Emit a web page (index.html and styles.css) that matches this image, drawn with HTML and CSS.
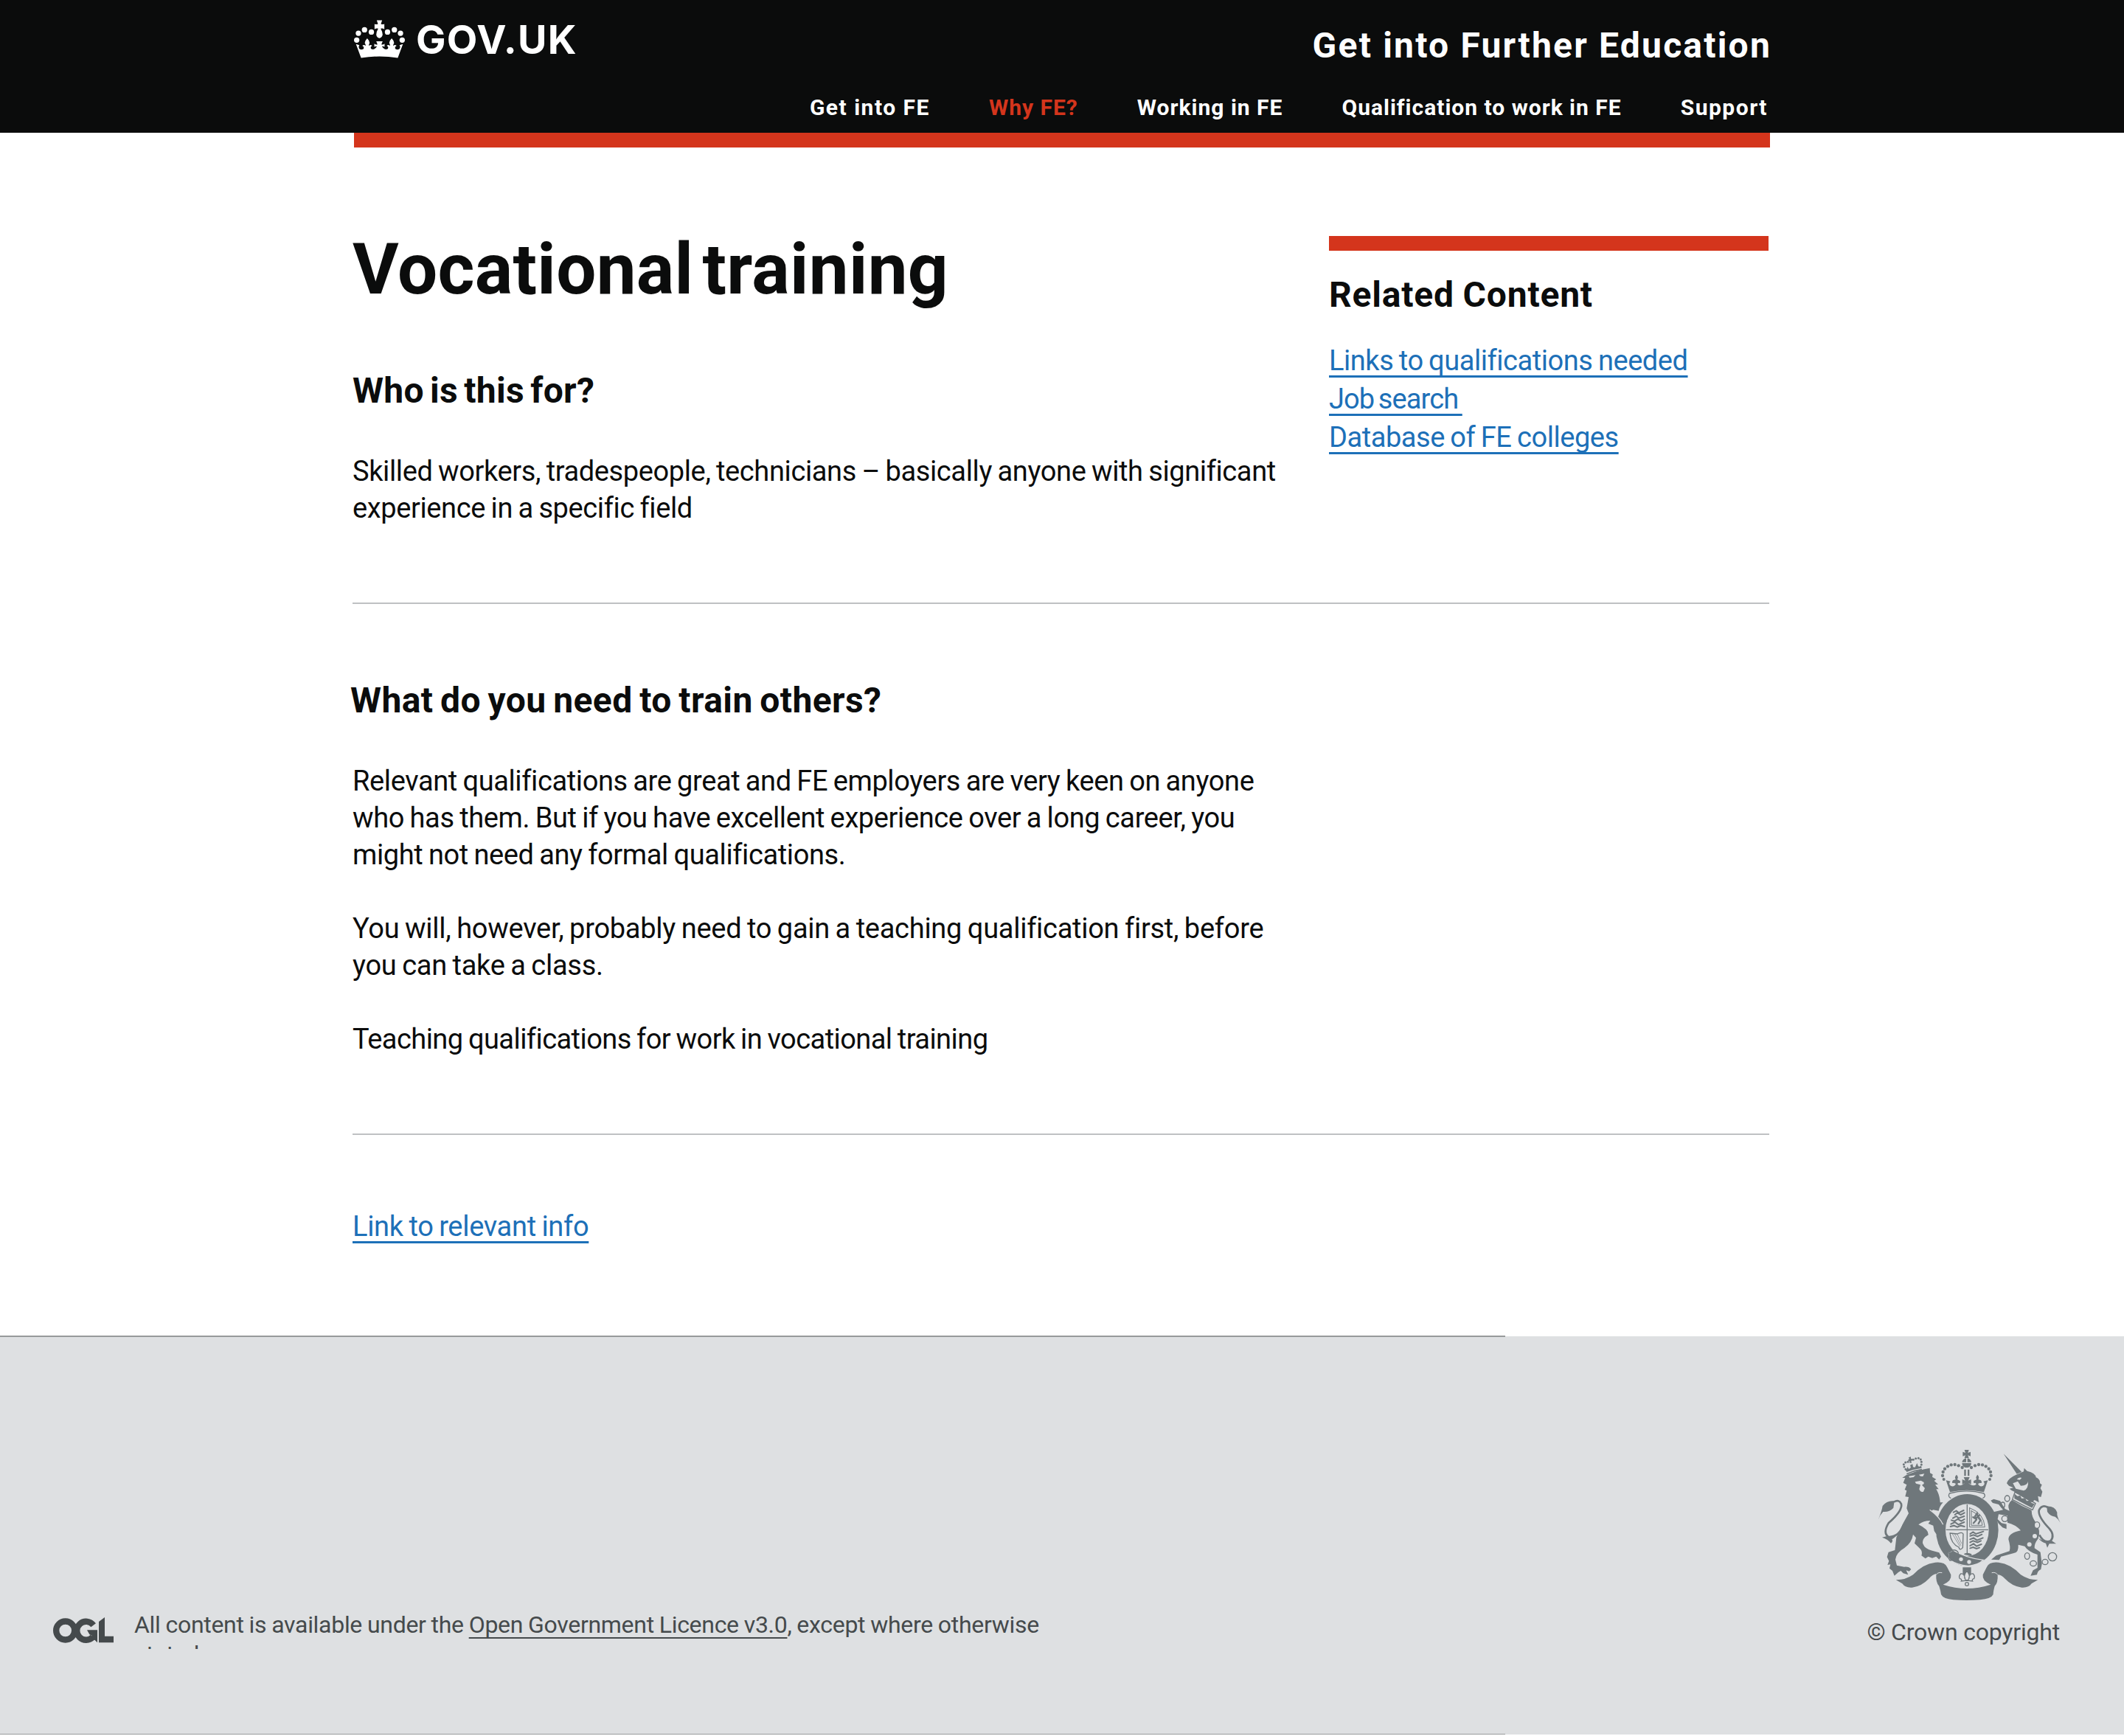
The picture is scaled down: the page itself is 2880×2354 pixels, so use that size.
FILE: index.html
```html
<!DOCTYPE html>
<html lang="en">
<head>
<meta charset="utf-8">
<title>Vocational training - Get into Further Education</title>
<link rel="stylesheet" href="styles.css">
</head>
<body>
<header class="header">
  <div class="header-inner">
    <a class="logo">
      <svg class="logo-crown" viewBox="60 50 208 156" aria-hidden="true">
        <g fill="#fff">
          <circle cx="71" cy="132" r="11"/><circle cx="78" cy="104" r="11"/><circle cx="103" cy="90" r="11"/><circle cx="131" cy="99" r="11"/>
          <circle cx="257" cy="132" r="11"/><circle cx="250" cy="104" r="11"/><circle cx="225" cy="90" r="11"/><circle cx="197" cy="99" r="11"/>
          <path d="M153 51H175L170 66Q177 70 184 66V88Q177 82 169 85Q176 96 177 110Q174 123 164 124Q153 123 151 110Q152 96 159 85Q151 82 144 88V66Q151 70 158 66Z"/>
          <path d="M68 148L82 153Q77 160 82 168Q90 174 99 168Q103 160 94 155Q101 149 108 156Q108 150 104 144Q104 135 114 125Q124 135 124 144Q120 150 121 156Q127 149 134 155Q125 160 130 168Q140 174 148 165Q152 160 154 158Q148 156 143 160V147Q149 152 156 150L151 137H177L172 150Q179 152 185 147V160Q180 156 174 158Q176 160 180 165Q188 174 198 168Q203 160 194 155Q201 149 207 156Q208 150 204 144Q204 135 214 125Q224 135 224 144Q220 150 220 156Q227 149 234 155Q225 160 229 168Q238 174 246 168Q251 160 246 153L260 148L239 205Q164 193 89 205Z"/>
        </g>
      </svg>
      <span class="logo-text">GOV.UK</span>
    </a>
    <div class="header-right">
      <div class="service-name">Get into Further Education</div>
      <nav class="nav">
        <a class="wide">Get into FE</a>
        <a class="active">Why FE?</a>
        <a>Working in FE</a>
        <a>Qualification to work in FE</a>
        <a class="wide">Support</a>
      </nav>
    </div>
  </div>
</header>
<div class="accent-bar"></div>

<main class="main">
  <div class="intro">
    <div class="column">
      <h1>Vocational training</h1>
      <h2 class="who">Who is this for?</h2>
      <p>Skilled workers, tradespeople, technicians – basically anyone with significant<br>experience in a specific field</p>
    </div>
    <aside class="related">
      <h2>Related Content</h2>
      <a class="link">Links to qualifications needed</a>
      <a class="link job-link">Job search&nbsp;</a>
      <a class="link">Database of FE colleges</a>
    </aside>
  </div>
  <hr>
  <h2 class="what">What do you need to train others?</h2>
  <p>Relevant qualifications are great and FE employers are very keen on anyone<br>who has them. But if you have excellent experience over a long career, you<br>might not need any formal qualifications.</p>
  <p class="loose">You will, however, probably need to gain a teaching qualification first, before<br>you can take a class.</p>
  <p class="tight">Teaching qualifications for work in vocational training</p>
  <hr>
  <a class="link info-link">Link to relevant info</a>
</main>

<footer class="footer">
  <div class="licence">
    <svg class="ogl" viewBox="96 100 246 105" aria-hidden="true">
      <g fill="none" stroke="#454a4c" stroke-width="25">
        <circle cx="146" cy="154" r="37.500"/>
        <path d="M260 132A37.500 37.500 0 1 0 258 180"/>
      </g>
      <path fill="#454a4c" d="M234 152H276V203L266 193L250 188L254 174L244 170ZM282 118L306 100V177H342V203H282Z"/>
    </svg>
    <p class="licence-text">All content is available under the <a>Open Government Licence v3.0</a>, except where otherwise<br>stated</p>
  </div>
  <div class="copyright">
    <svg class="crest" viewBox="78 45 744 618" aria-hidden="true">
      <g fill="#6f777b">
        <!-- imperial crown -->
        <path d="M431 48H449L445 60L456 56V74L445 70L449 81H431L435 70L424 74V56L435 60ZM421 98Q425 84 438 82V98ZM443 82Q456 84 459 98H443ZM421 102H459Q458 116 446 120H434Q422 116 421 102ZM430 128H437V154H430ZM444 128H451V154H444Z"/>
        <path d="M356 172L374 176Q364 186 376 195Q390 200 396 186L388 182Q376 186 384 172L396 168Q388 160 399 149Q409 160 401 168L413 174Q417 186 405 182L403 188Q414 198 428 186L434 182L422 188V168L434 173L428 159H452L446 173L458 168V188L446 182L454 188Q468 198 479 188L476 182Q465 186 469 174L481 168Q474 160 484 149Q494 160 487 168L498 172Q506 186 494 182L486 186Q492 200 506 195Q518 186 508 176L526 172L510 220Q440 204 372 220Z"/>
        <g>
          <circle cx="422" cy="120" r="6.500"/><circle cx="407" cy="112" r="6.500"/><circle cx="392" cy="108" r="6.500"/><circle cx="377" cy="109" r="6.500"/><circle cx="363" cy="115" r="6.500"/><circle cx="351" cy="125" r="6.500"/><circle cx="344" cy="138" r="6.500"/><circle cx="342" cy="153" r="6.500"/><circle cx="347" cy="168" r="6"/>
          <circle cx="459" cy="120" r="6.500"/><circle cx="474" cy="112" r="6.500"/><circle cx="489" cy="108" r="6.500"/><circle cx="504" cy="109" r="6.500"/><circle cx="518" cy="115" r="6.500"/><circle cx="530" cy="125" r="6.500"/><circle cx="537" cy="138" r="6.500"/><circle cx="539" cy="153" r="6.500"/><circle cx="534" cy="168" r="6"/>
        </g>
        <path fill="none" stroke="#6f777b" stroke-width="4" d="M376 245Q362 238 370 225Q440 206 510 225Q520 238 505 245"/>
        <!-- garter and shield -->
        <ellipse cx="442" cy="374" rx="127" ry="146"/>
        <ellipse cx="442" cy="374" rx="88" ry="106" fill="#dee0e2"/>
        <path d="M440 270H444V470H440ZM356 371H528V375H356Z"/>
        <g fill="none" stroke="#6f777b" stroke-width="6" stroke-linecap="round">
          <path d="M386 302L398 296L408 304L428 294M392 312L402 304L416 312L431 304M384 326L398 318L408 326L430 318M378 334L390 338L404 330L418 338L431 330M376 350L392 342L406 352L430 342M374 360L388 356L402 362L416 356L431 360"/>
          <path d="M454 390L466 382L478 390L508 380M454 398L468 394L484 400L502 392M454 412L468 406L482 416L506 406M454 424L466 418L484 424L498 418M454 438L468 430L480 440L500 432M454 448L466 444L480 450L492 446"/>
          <path stroke-width="3" d="M452 284V362H514Q510 306 452 284M459 296V355H504Q502 316 459 296"/>
          <path stroke-width="7" d="M468 346L480 332L474 318L482 306L486 322L496 334L488 348M466 322L476 328L492 314"/>
          <path stroke-width="4" d="M372 387L402 390Q420 380 426 390L424 446Q412 460 408 444Q376 430 372 387"/>
          <path stroke-width="2" d="M382 390L412 440M392 391L416 436M402 391L419 428"/>
        </g>
        <path stroke="#dee0e2" stroke-width="4" d="M384 456Q436 488 508 496Q486 518 446 520Q400 516 372 496Q360 484 368 466Z"/>
        <path fill="none" stroke="#6f777b" stroke-width="4" d="M372 498Q358 480 370 464Q384 450 398 458Q410 466 404 472Q384 470 388 496Z"/>
        <circle cx="417" cy="493" r="8" fill="#dee0e2"/><circle cx="450" cy="504" r="8" fill="#dee0e2"/>
        <path d="M430 470Q446 464 460 472V480L430 474ZM424 526H458V556H448L441 538L433 556H424Z"/>
        <path fill="none" stroke="#6f777b" stroke-width="4" d="M441 540Q424 560 436 578H446Q458 560 441 540M434 574Q430 548 416 552Q406 562 412 572Q422 574 418 582L434 580M448 574Q452 548 466 552Q476 562 470 572Q460 574 464 582L448 580M430 580H452"/>
        <circle cx="441" cy="594" r="7" fill="none" stroke="#6f777b" stroke-width="4"/>
        <!-- lion -->
        <g>
          <circle cx="192" cy="127" r="4.500"/><circle cx="186" cy="117" r="4.500"/><circle cx="184" cy="107" r="4.500"/><circle cx="191" cy="99" r="4.500"/><circle cx="201" cy="97" r="4.500"/>
          <circle cx="223" cy="88" r="4.500"/><circle cx="233" cy="83" r="4.500"/><circle cx="244" cy="82" r="4.500"/><circle cx="253" cy="87" r="4.500"/><circle cx="256" cy="97" r="4.500"/><circle cx="256" cy="108" r="4.500"/>
        </g>
        <path d="M204 79L213 76L213 84L220 85L218 92L214 92L216 101H208L208 94L202 93L203 86L207 86ZM188 124L196 128L199 117L205 126L213 120L210 110L220 106L222 118L230 119L238 102L243 115L249 116L255 112L257 122Q226 126 196 138Z"/>
        <path d="M196 146Q226 132 258 128" fill="none" stroke="#6f777b" stroke-width="5"/>
        <path d="M194 151Q236 132 290 122L291 142L302 148L300 158L316 168L308 174L324 188L312 190L326 208L316 208Q330 230 332 262L344 262Q330 276 326 296L304 292L296 296Q312 308 332 330Q350 350 354 396L340 388L334 400L326 388L316 390L308 378L304 356L284 348L292 336Q264 336 244 352Q286 372 284 394Q256 410 262 430Q270 452 300 458L328 466L336 482L328 494L316 482L300 488L284 482L272 490L256 478Q262 460 248 448L228 428L234 406L222 392Q218 424 186 448Q154 466 150 494L156 518L186 524Q206 522 214 534L206 542L194 538L202 556L182 550L172 540L162 546L146 560L138 540L126 530L130 514L118 516L124 500L116 484L122 464L148 456L154 404L182 346L204 306L196 286L204 240L190 238L196 214L188 210L196 190L182 182L190 162L178 162Z"/>
        <path fill="#dee0e2" d="M204 155L232 151L224 159L208 161ZM246 149L268 145L262 156L252 155ZM230 178L254 173L266 180V186L258 191L270 204L264 218Q252 222 247 208L252 190L234 185Z"/>
        <path fill="none" stroke="#dee0e2" stroke-width="4" d="M290 292Q330 322 344 352"/>
        <path fill="none" stroke="#6f777b" stroke-width="8" d="M184 352Q164 404 122 402Q98 386 122 346Q180 296 174 268Q164 248 144 260"/>
        <path d="M80 332Q94 300 98 276Q116 252 146 256L142 284Q126 302 100 300Q88 312 80 332ZM96 404L118 398L140 402L162 388Q148 406 136 412Q142 420 132 428Q120 412 96 404Z"/>
        <!-- unicorn -->
        <path d="M590 64L664 138L644 146ZM640 150L672 136L674 122L686 134Q720 142 722 160Q740 168 738 184L746 190L740 204L748 218L742 240L730 236L734 262L716 252L706 262Q676 246 634 218Q622 214 614 206L630 202L612 194L603 184Q608 164 640 150Z"/>
        <path fill="#dee0e2" d="M644 168Q654 158 664 162L656 170ZM628 184L648 176L660 194Q688 192 690 176Q692 206 672 214L640 206Z"/>
        <path fill="none" stroke="#6f777b" stroke-width="4" d="M636 220Q680 240 720 266L708 292Q666 272 626 250Z"/>
        <path d="M634 226L646 236L658 234L664 246L678 244L684 256L698 254L704 264L716 268L706 284L634 246Z"/>
        <path d="M624 252Q664 278 704 294Q704 322 722 344Q744 380 730 410Q714 430 716 448L740 464L746 512L742 534Q728 540 726 556L700 560L710 538L728 528V474Q690 462 676 440L650 434Q652 466 632 468L580 482L572 496L540 494L560 478L614 460Q620 446 610 412Q610 386 660 376Q640 352 606 344L606 316L570 310L566 330L582 346L602 350V370L586 364L570 348L552 318L552 300L588 292L570 270L546 264L538 254L550 248L576 256L596 288L614 296Q602 270 624 252Z"/>
        <path fill="none" stroke="#6f777b" stroke-width="8" d="M736 394Q754 430 782 418Q800 396 776 368Q730 320 734 294Q746 268 770 282"/>
        <path d="M821 344Q806 318 808 302Q798 276 766 278L768 300Q780 318 800 320Q812 328 821 344ZM732 408Q744 424 762 428L768 446L776 430L804 430L786 418L760 422Z"/>
        <g fill="none" stroke="#6f777b" stroke-width="4">
          <ellipse cx="605" cy="246" rx="10" ry="12"/><ellipse cx="587" cy="272" rx="8" ry="11"/><circle cx="595" cy="328" r="12"/><ellipse cx="726" cy="354" rx="11" ry="13" fill="#dee0e2"/><ellipse cx="686" cy="480" rx="10" ry="13"/><ellipse cx="711" cy="510" rx="13" ry="11"/><ellipse cx="759" cy="504" rx="12" ry="11"/><circle cx="789" cy="483" r="17"/>
        </g>
        <circle cx="717" cy="399" r="9" fill="#dee0e2"/><circle cx="695" cy="433" r="9" fill="#dee0e2"/>
        <!-- ribbon -->
        <path d="M152 577Q190 578 222 556Q262 512 312 506Q350 502 360 524L376 556Q380 582 344 596Q440 628 538 596Q502 582 506 556L522 524Q532 502 570 506Q620 512 660 556Q692 578 730 577L704 592Q692 610 664 608Q624 602 596 572Q580 556 566 556Q568 590 554 602Q548 624 548 636Q540 654 494 658Q440 662 386 658Q344 654 336 636Q334 620 328 602Q314 590 316 552Q302 554 286 572Q258 602 218 608Q190 610 178 592Z"/>
        <path fill="none" stroke="#dee0e2" stroke-width="3" d="M316 556Q324 544 340 548M566 556Q558 544 542 548"/>
      </g>
    </svg>
    <div class="copyright-text">© Crown copyright</div>
  </div>
</footer>
</body>
</html>
```
FILE: styles.css
```css
* { box-sizing: border-box; }
body {
  margin: 0;
  background: #fff;
  color: #0b0c0c;
  font-family: Roboto, "Liberation Sans", sans-serif;
  font-size: 38px;
  line-height: 50px;
}
h1, h2, p { margin: 0; }
p { letter-spacing: -0.380px; word-spacing: -1.500px; }

.header { height: 180px; background: #0b0c0c; color: #fff; }
.header-inner {
  display: flex;
  justify-content: space-between;
  width: 1920px;
  margin: 0 auto;
}
.logo { display: flex; align-items: flex-start; gap: 15px; padding-top: 27px; }
.logo-crown { width: 69px; height: 52px; }
.logo-text {
  font-family: Inter, sans-serif;
  font-weight: 650;
  font-size: 54px;
  line-height: 54px;
  letter-spacing: 1.200px;
}
.header-right { padding-top: 37px; }
.service-name {
  margin-right: -2px;
  font-size: 48px;
  font-weight: 700;
  text-align: right;
  letter-spacing: 2.200px;
}
.nav {
  display: flex;
  justify-content: flex-end;
  gap: 80px;
  margin-top: 39px;
  padding-right: 3px;
  font-size: 30px;
  line-height: 40px;
  font-weight: 700;
  letter-spacing: 1px;
}
.nav .active { color: #d4351c; }
.nav .wide { letter-spacing: 1.500px; }
.accent-bar { width: 1920px; height: 20px; margin: 0 auto; background: #d4351c; }

.main { width: 1921px; height: 1612px; margin-left: 478px; }
.intro { display: flex; justify-content: space-between; height: 617px; }
h1 {
  margin-top: 115px;
  font-size: 96px;
  line-height: 100px;
  font-weight: 700;
  letter-spacing: 0.350px;
  word-spacing: -12px;
}
h2 { font-size: 48px; line-height: 50px; font-weight: 700; }
.who { margin-top: 90px; letter-spacing: 0.300px; word-spacing: -4px; }
.column p { margin-top: 59px; }
.related {
  width: 596px;
  height: max-content;
  margin: 120px 1px 0 0;
  border-top: 20px solid #d4351c;
  display: flex;
  flex-direction: column;
  align-items: flex-start;
  line-height: 52px;
}
.related h2 { margin: 35px 0 38px; letter-spacing: 0.800px; word-spacing: -1px; }
.link {
  color: #1d70b8;
  letter-spacing: -0.450px;
  word-spacing: -1.500px;
  text-decoration: underline 3px;
  text-underline-offset: 7px;
  text-decoration-skip-ink: none;
}
.job-link { letter-spacing: -0.900px; word-spacing: -3px; }
hr { height: 2px; margin: 0; border: 0; background: #bfc1c3; }
.what { margin: 106px 0 59px -3px; letter-spacing: 0.400px; word-spacing: -2.700px; }
.main > p + p { margin-top: 50px; }
.main > p + hr { margin-top: 103px; }
.loose { letter-spacing: -0.270px; }
.tight { letter-spacing: -0.560px; }
.info-link { display: inline-block; margin-top: 99px; letter-spacing: -0.300px; }

.footer {
  position: relative;
  display: flex;
  justify-content: space-between;
  height: 540px;
  padding: 153px 86px 0 72px;
  background: #dee0e2;
  color: #454a4c;
  font-size: 32px;
  line-height: 40px;
}
.footer::before, .footer::after {
  content: "";
  position: absolute;
  left: 0;
  width: 2041px;
  height: 2px;
  background: #979a9b;
}
.footer::before { top: -1px; }
.footer::after { bottom: -1px; }
.licence { display: flex; align-items: flex-start; gap: 28px; margin-top: 218px; }
.ogl { width: 82px; height: 35px; margin-top: 10px; }
.licence-text {
  height: 53px;
  overflow: hidden;
  white-space: nowrap;
  letter-spacing: -0.300px;
  word-spacing: -0.700px;
}
.licence-text a { text-decoration: underline 2px; text-underline-offset: 6px; text-decoration-skip-ink: none; }
.copyright { display: flex; flex-direction: column; align-items: flex-end; gap: 22px; }
.crest { width: 248px; height: 206px; }
.copyright-text { padding-right: 1px; white-space: nowrap; letter-spacing: -0.200px; }
```
